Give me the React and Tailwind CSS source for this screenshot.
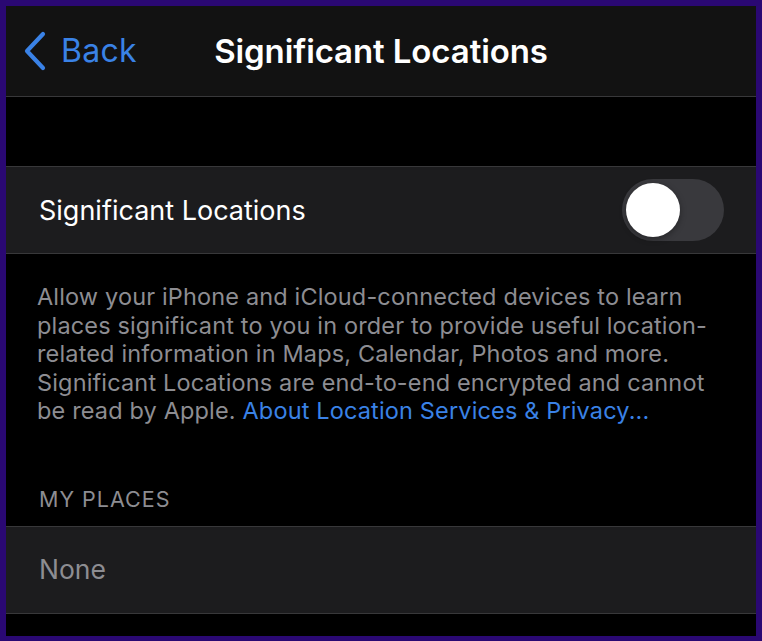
export default function App() {
  return (
    <div className="w-[762px] h-[641px] bg-[#2a0873] pt-[6px] pl-[6px] pr-[6px] pb-[5px]" style={{ fontFamily: 'Inter, "Noto Sans", sans-serif' }}>
      <div className="w-full h-full bg-black flex flex-col overflow-hidden">
        <div className="h-[91px] bg-[#121212] border-b border-[#38383a] flex items-center relative shrink-0">
          <div className="flex items-center pl-[16px] gap-[13px] text-[#3a82e6]">
            <svg width="26" height="40" viewBox="0 0 26 40" fill="none">
              <path d="M21 3 L5 20 L21 37" stroke="#3a82e6" strokeWidth="4.2" strokeLinecap="round" strokeLinejoin="round" />
            </svg>
            <span className="text-[32px] leading-none tracking-[0.3px]">Back</span>
          </div>
          <div className="absolute left-0 right-0 text-center text-white text-[33px] font-semibold leading-none tracking-[-0.1px] pointer-events-none">
            Significant Locations
          </div>
        </div>
        <div className="h-[69px] shrink-0"></div>
        <div className="h-[88px] bg-[#1c1c1e] border-t border-b border-[#38383a] flex items-center justify-between pl-[33px] pr-[32px] shrink-0">
          <span className="text-white text-[27px] leading-none">Significant Locations</span>
          <div className="w-[102px] h-[62px] rounded-full bg-[#39393d] flex items-center pl-[4px]">
            <div className="w-[54px] h-[54px] rounded-full bg-white shadow-[0_2px_6px_rgba(0,0,0,0.35)]"></div>
          </div>
        </div>
        <p className="pl-[31px] pr-[20px] pt-[29px] text-[#8d8d92] text-[23.5px] leading-[28.5px] tracking-[0.15px]">
          Allow your iPhone and iCloud-connected devices to learn places significant to you in order to provide useful location-related information in Maps, Calendar, Photos and more. Significant Locations are end-to-end encrypted and cannot be read by Apple. <span className="text-[#3a82e6]">About Location Services &amp; Privacy...</span>
        </p>
        <div className="pl-[33px] mt-[63px] h-[37px] text-[#8d8d92] text-[21.5px] leading-none uppercase tracking-[1px] shrink-0">
          My Places
        </div>
        <div className="h-[88px] bg-[#1c1c1e] border-t border-b border-[#38383a] flex items-center pl-[33px] shrink-0">
          <span className="text-[#8d8d92] text-[26.5px] leading-none">None</span>
        </div>
      </div>
    </div>
  );
}
